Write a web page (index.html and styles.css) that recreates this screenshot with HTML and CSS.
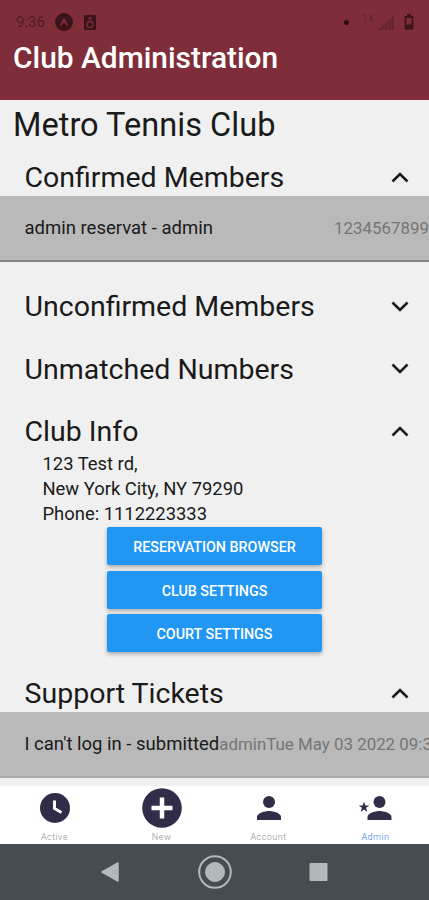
FILE: index.html
```html
<!DOCTYPE html>
<html lang="en">
<head>
    <meta charset="UTF-8">
    <meta name="viewport" content="width=device-width, initial-scale=1.0">
    <title>Club Administration</title>
    <link rel="stylesheet" href="styles.css">
</head>
<body>
    <div class="screen">
        <header class="header">
            <div class="status-bar">
                <span class="time">9:36</span>
                <svg class="status-app" width="18" height="18" viewBox="0 0 18 18">
                    <circle cx="9" cy="9" r="9" fill="#3b1419"/>
                    <path d="M4.800 12.400L8 6Q9 4.400 10 6L13.200 12.400L11.800 13L9 8.800L6.200 13Z" fill="#7f2e39"/>
                </svg>
                <svg class="status-speaker" width="12" height="15" viewBox="0 0 12 15">
                    <rect width="12" height="15" rx="1.500" fill="#3b1419"/>
                    <circle cx="6" cy="3.500" r="1.400" fill="#7f2e39"/>
                    <circle cx="6" cy="9.500" r="3" fill="none" stroke="#7f2e39" stroke-width="1.300"/>
                </svg>
                <span class="dot"></span>
                <span class="network">1X</span>
                <svg class="signal" width="16" height="15" viewBox="0 0 16 15">
                    <path d="M0 15L16 0V15Z" fill="#702832"/>
                    <path d="M1.500 15V13M5 15V10.500M8.500 15V7.500M12 15V4.500M15 15V1.500" stroke="#642530" stroke-width="1.500"/>
                </svg>
                <svg class="battery" width="10" height="16" viewBox="0 0 10 16">
                    <path d="M3 1H7M1.500 3H8.500V14.500H1.500Z" fill="none" stroke="#3b1419" stroke-width="1.800"/>
                    <path d="M1 10.500H9V15H1Z" fill="#3b1419"/>
                </svg>
            </div>
            <h1>Club Administration</h1>
        </header>

        <main class="content">
            <h2 class="club-name">Metro Tennis Club</h2>

            <section class="section">
                <div class="section-title">
                    <h3>Confirmed Members</h3>
                    <svg class="chevron" viewBox="0 0 18 11"><path d="M1.500 9.500L9 2L16.500 9.500"/></svg>
                </div>
                <div class="list-item">
                    <span>admin reservat - admin</span>
                    <span class="muted">1234567899</span>
                </div>
            </section>

            <section class="section">
                <div class="section-title">
                    <h3>Unconfirmed Members</h3>
                    <svg class="chevron" viewBox="0 0 18 11"><path d="M1.500 1.500L9 9L16.500 1.500"/></svg>
                </div>
            </section>

            <section class="section">
                <div class="section-title">
                    <h3>Unmatched Numbers</h3>
                    <svg class="chevron" viewBox="0 0 18 11"><path d="M1.500 1.500L9 9L16.500 1.500"/></svg>
                </div>
            </section>

            <section class="section club-info">
                <div class="section-title">
                    <h3>Club Info</h3>
                    <svg class="chevron" viewBox="0 0 18 11"><path d="M1.500 9.500L9 2L16.500 9.500"/></svg>
                </div>
                <div class="address">
                    <p>123 Test rd,</p>
                    <p>New York City, NY 79290</p>
                    <p>Phone: 1112223333</p>
                </div>
                <div class="buttons">
                    <button class="btn">RESERVATION BROWSER</button>
                    <button class="btn">CLUB SETTINGS</button>
                    <button class="btn">COURT SETTINGS</button>
                </div>
            </section>

            <section class="section">
                <div class="section-title">
                    <h3>Support Tickets</h3>
                    <svg class="chevron" viewBox="0 0 18 11"><path d="M1.500 9.500L9 2L16.500 9.500"/></svg>
                </div>
                <div class="list-item ticket">
                    <span>I can't log in - submitted</span>
                    <span class="muted">adminTue May 03 2022 09:3</span>
                </div>
            </section>
        </main>

        <nav class="tabs">
            <a class="tab">
                <svg width="30" height="30" viewBox="0 0 30 30">
                    <circle cx="15" cy="15" r="15"/>
                    <path d="M14.500 7.500V15.500L21.500 19.500" fill="none" stroke="#fff" stroke-width="3"/>
                </svg>
                <span>Active</span>
            </a>
            <a class="tab">
                <svg width="40" height="40" viewBox="0 0 40 40">
                    <circle cx="20" cy="20" r="19.800"/>
                    <path d="M20 9.500V30.500M9.500 20H30.500" stroke="#fff" stroke-width="4.500"/>
                </svg>
                <span>New</span>
            </a>
            <a class="tab">
                <svg width="24" height="24" viewBox="0 0 24 24">
                    <circle cx="12" cy="6" r="6"/>
                    <path d="M0 24V21C0 17 8 15 12 15S24 17 24 21V24Z"/>
                </svg>
                <span>Account</span>
            </a>
            <a class="tab active">
                <svg width="33" height="24" viewBox="0 0 33 24">
                    <circle cx="20.500" cy="6" r="6"/>
                    <path d="M8.500 24V21C8.500 17 16.500 15 20.500 15S32.500 17 32.500 21V24Z"/>
                    <path d="M5 5.500L6.300 9.400H10.300L7.100 11.800L8.300 15.900L5 13.400L1.700 15.900L2.900 11.800L-0.300 9.400H3.700Z"/>
                </svg>
                <span>Admin</span>
            </a>
        </nav>

        <div class="system-nav">
            <svg width="20" height="20" viewBox="0 0 20 20"><path d="M17 1V19L1 10Z" stroke-width="1.500" stroke-linejoin="round"/></svg>
            <svg width="34" height="34" viewBox="0 0 34 34">
                <circle cx="17" cy="17" r="15.800" fill="none" stroke-width="2"/>
                <circle cx="17" cy="17" r="9.500"/>
            </svg>
            <svg width="20" height="20" viewBox="0 0 20 20"><rect x="0.500" y="1" width="18" height="18" rx="1" stroke="none"/></svg>
        </div>
    </div>
</body>
</html>
```

FILE: styles.css
```css
* {
    margin: 0;
    padding: 0;
    box-sizing: border-box;
}

body {
    font-family: Roboto, sans-serif;
    background: #f0f0f0;
    color: #1a1a1a;
}

.screen {
    width: 429px;
    height: 900px;
    display: flex;
    flex-direction: column;
    overflow: hidden;
}

.header {
    height: 100px;
    flex-shrink: 0;
    background: #7f2e39;
    color: #fff;
}

.status-bar {
    display: flex;
    align-items: center;
    height: 44px;
    padding: 0 15px 0 16px;
    color: #4f1b23;
}

.time {
    width: 39px;
    font-size: 15px;
}

.status-speaker {
    margin-left: 11px;
}

.dot {
    width: 5px;
    height: 5px;
    margin-left: auto;
    border-radius: 50%;
    background: #2b0d12;
}

.network {
    margin: -8px 4px 0 13px;
    font-size: 10px;
    color: #642530;
}

.battery {
    margin-left: 10px;
}

h1 {
    margin-left: 13px;
    font-size: 29.900px;
    font-weight: 500;
    line-height: 28px;
    white-space: nowrap;
}

.content {
    height: 686px;
    flex-shrink: 0;
}

.club-name {
    padding-left: 13px;
    font-size: 32.600px;
    font-weight: 400;
    line-height: 50px;
    white-space: nowrap;
}

.section {
    margin-bottom: 26px;
}

.club-name + .section {
    margin-top: 9px;
}

.section-title {
    display: flex;
    align-items: center;
    justify-content: space-between;
    height: 36.500px;
    padding: 0 20px 0 24.500px;
}

h3 {
    padding-top: 1px;
    font-size: 28.500px;
    font-weight: 400;
    white-space: nowrap;
}

.chevron {
    width: 18px;
    height: 11px;
    fill: none;
    stroke: #1a1a1a;
    stroke-width: 2.600;
}

.list-item {
    display: flex;
    align-items: center;
    justify-content: space-between;
    height: 66.500px;
    padding: 1px 0 0 24.500px;
    background: #b9b9b9;
    border-bottom: 2px solid #858585;
    font-size: 18.500px;
    white-space: nowrap;
    overflow: hidden;
}

.muted {
    color: #757575;
    font-size: 16.900px;
}

.ticket {
    justify-content: flex-start;
    border-bottom-color: #a8a8a8;
}

.address {
    padding: 1px 0 0 42.500px;
    font-size: 18.400px;
    line-height: 25px;
}

.buttons {
    display: flex;
    flex-direction: column;
    align-items: center;
    gap: 5.500px;
    padding-top: 1.500px;
}

.btn {
    width: 215px;
    height: 38px;
    padding-top: 2px;
    border: none;
    border-radius: 2px;
    background: #2196f3;
    box-shadow: 0 2px 4px rgba(0, 0, 0, 0.3);
    color: #fff;
    font-family: inherit;
    font-size: 14.300px;
    font-weight: 500;
}

.club-info {
    margin-bottom: 23px;
}

.tabs {
    display: flex;
    height: 58px;
    padding-left: 1px;
    flex-shrink: 0;
    background: #fff;
}

.tab {
    flex: 1;
    display: grid;
    grid-template-rows: 44px 14px;
    place-items: center;
    font-size: 9px;
    font-weight: 300;
    letter-spacing: 0.500px;
    color: #8e8e8e;
}

.tab svg {
    fill: #2f2d48;
}

.tab.active {
    color: #1e7cf0;
}

.system-nav {
    display: flex;
    align-items: center;
    justify-content: center;
    gap: 77px;
    height: 56px;
    flex-shrink: 0;
    background: #454d52;
}

.system-nav svg {
    fill: #b3b9bb;
    stroke: #b3b9bb;
}
```
